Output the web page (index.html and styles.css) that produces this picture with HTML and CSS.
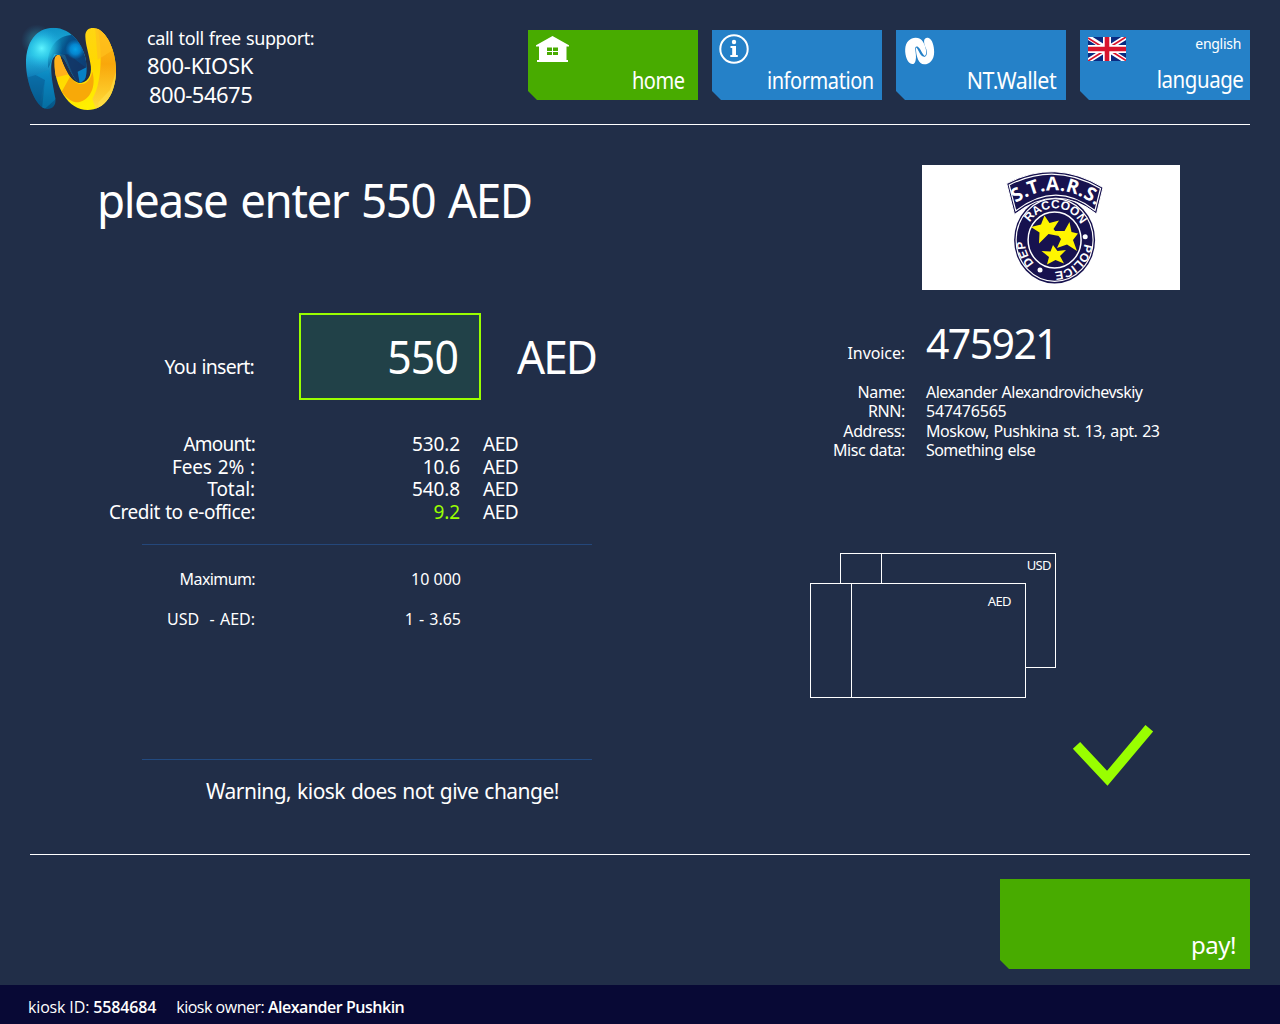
FILE: index.html
```html
<!DOCTYPE html>
<html lang="en">
<head>
<meta charset="utf-8">
<title>Kiosk payment</title>
<link rel="stylesheet" href="styles.css">
</head>
<body>
<header class="header">
  <svg class="logo" viewBox="0 0 345 315">
    <defs>
      <linearGradient id="blue" x1="0" y1="0" x2="0" y2="1"><stop offset="0" stop-color="#0d8fc4"/><stop offset=".35" stop-color="#25b8e0"/><stop offset=".6" stop-color="#0f7db8"/><stop offset="1" stop-color="#04507f"/></linearGradient>
      <linearGradient id="arch" x1="0" y1="0" x2="1" y2=".6"><stop offset="0" stop-color="#10b5d8"/><stop offset=".4" stop-color="#06518a"/><stop offset="1" stop-color="#103a70"/></linearGradient>
      <radialGradient id="glow"><stop offset="0" stop-color="#5ff4ff"/><stop offset=".5" stop-color="#34d4ee" stop-opacity=".6"/><stop offset="1" stop-color="#20a0e0" stop-opacity="0"/></radialGradient>
      <radialGradient id="spot"><stop offset="0" stop-color="#06a2e8"/><stop offset=".5" stop-color="#0490dc" stop-opacity=".85"/><stop offset="1" stop-color="#0480d0" stop-opacity="0"/></radialGradient>
      <linearGradient id="gold" x1="0" y1="0" x2=".3" y2="1"><stop offset="0" stop-color="#ffd51c"/><stop offset=".6" stop-color="#ffd800"/><stop offset="1" stop-color="#fff000"/></linearGradient>
      <linearGradient id="amber" x1="0" y1="0" x2="0" y2="1"><stop offset="0" stop-color="#ffc21c"/><stop offset=".45" stop-color="#f9a70b"/><stop offset="1" stop-color="#ffe03c"/></linearGradient>
      <clipPath id="blueClip"><path d="M95 282C65 282 33 205 33 145C33 80 65 38 115 38C170 38 215 95 215 160C215 185 210 200 195 204C172 195 160 150 145 130C135 116 125 116 118 125C100 140 112 200 121 250C124 272 112 283 95 282Z"/></clipPath>
      <clipPath id="goldClip"><path d="M211 65C210 45 222 38 237 39C275 42 303 110 303 165C303 235 270 285 218 285C160 285 118 215 118 140C118 125 128 116 135 122C145 150 165 204 198 204C225 200 232 170 226 145C220 110 212 90 211 65Z"/></clipPath>
    </defs>
    <circle cx="66" cy="76" r="48" fill="url(#glow)" opacity=".35"/>
    <g clip-path="url(#blueClip)">
      <rect x="30" y="30" width="190" height="260" fill="url(#blue)"/>
      <path d="M100 160C92 110 120 62 170 60L225 60V220H190L150 120L118 118Z" fill="url(#arch)"/>
      <path d="M30 190L62 180L90 195L68 290H30Z" fill="#045b92" opacity=".45"/>
      <path d="M62 180L100 165L125 250L80 290L90 195Z" fill="#0693cb" opacity=".4"/>
      <circle cx="80" cy="100" r="62" fill="url(#glow)"/>
      <path d="M125 120L160 118L215 160L190 170L196 210L150 150Z" fill="#15325f" opacity=".7"/>
      <circle cx="181" cy="103" r="30" fill="url(#spot)"/>
      <path d="M188 170L216 156V190L194 205Z" fill="#0781c5"/>
    </g>
    <g clip-path="url(#goldClip)">
      <rect x="110" y="30" width="200" height="260" fill="url(#gold)"/>
      <path d="M248 38C262 110 262 200 232 252L245 290H310V30Z" fill="url(#amber)"/>
      <path d="M248 134L310 95V30H240Z" fill="#ffc01c" opacity=".7"/>
      <path d="M112 110H140L160 178L120 188Z" fill="#ffb01c"/>
      <path d="M140 230L165 185C195 225 225 205 232 170C245 215 225 255 190 262C170 262 155 250 140 230Z" fill="#f8a908"/>
      <path d="M250 262L285 225L303 170V290H250Z" fill="#ffe050" opacity=".55"/>
    </g>
  </svg>
  <div class="support">
    <div class="support-title">call toll free support:</div>
    <div class="phone">800-KIOSK</div>
    <div class="phone phone-digits">800-54675</div>
  </div>
  <nav class="nav">
    <a class="tile tile-home">
      <svg class="icon icon-home" viewBox="0 0 33 26"><path fill="#fff" fill-rule="evenodd" d="M16.500 0L33 9.300V10.600H30.500V24H32V26H1V24H3V10.600H0V9.300ZM11 11.500V15H16V11.500ZM17 11.500V15H22V11.500ZM11 16V19H16V16ZM17 16V19H22V16Z"/></svg>
      <span class="label">home</span>
    </a>
    <a class="tile tile-info">
      <svg class="icon icon-info" viewBox="0 0 30 30"><circle cx="15" cy="15" r="13.700" fill="none" stroke="#fff" stroke-width="2"/><circle cx="15" cy="8" r="2.200" fill="#fff"/><path fill="#fff" d="M11.500 12H17V21H18.800V23H11.300V21H13.200V14H11.500Z"/></svg>
      <span class="label">information</span>
    </a>
    <a class="tile tile-wallet">
      <svg class="icon icon-wallet" viewBox="0 0 92 86"><path fill="#fff" d="M24 83C10 84 1 58 2 38C3 14 18 2 34 2C55 2 63 22 66 40C67 50 66 56 62 58C54 53 50 36 41 30C35 27 32 31 33 38C34 50 37 62 34 72C32 80 29 83 24 83Z"/><path fill="#fff" d="M60 14C60 4 67 1 74 3C86 8 91 28 91 46C91 70 78 84 60 84C44 84 35 60 35 32C42 34 46 58 60 61C69 62 70 50 67 38C64 30 60 24 60 14Z"/></svg>
      <span class="label">NT.Wallet</span>
    </a>
    <a class="tile tile-language">
      <div class="tile-top">
        <svg class="icon icon-flag" viewBox="0 0 38 24"><path fill="#0a2a80" d="M0 0H38V24H0Z"/><path stroke="#fff" stroke-width="5" d="M0 0L38 24M38 0L0 24"/><path stroke="#d8142c" stroke-width="1.700" d="M0 1L16 11M38 0L22 10M0 24L16 14M38 23.500L22 13.500"/><path stroke="#fff" stroke-width="8" d="M19 0V24M0 12H38"/><path stroke="#d8142c" stroke-width="4.600" d="M19 0V24M0 12H38"/></svg>
        <span class="current">english</span>
      </div>
      <span class="label">language</span>
    </a>
  </nav>
</header>

<main class="main">
  <section class="payment">
    <h1 class="title">please enter 550 AED</h1>
    <div class="insert">
      <span class="insert-label">You insert:</span>
      <span class="insert-box"><span class="insert-value">550</span></span>
      <span class="insert-unit">AED</span>
    </div>
    <div class="sums">
      <span class="tight">Amount:</span><span>530.2</span><span class="unit">AED</span>
      <span class="fees">Fees 2% :</span><span>10.6</span><span class="unit">AED</span>
      <span>Total:</span><span>540.8</span><span class="unit">AED</span>
      <span class="office">Credit to e-office:</span><span class="credit">9.2</span><span class="unit">AED</span>
    </div>
    <div class="limits">
      <span class="maximum">Maximum:</span><span>10 000</span>
      <span class="rate">USD&nbsp; - AED:</span><span class="rate">1 - 3.65</span>
    </div>
    <p class="warning">Warning, kiosk does not give change!</p>
  </section>

  <section class="details">
    <div class="provider">
      <svg class="badge" viewBox="0 0 150 125">
        <defs>
          <path id="ring" pathLength="360" d="M64.300 105.100A30.400 32 0 0 1 84.900 44.900A30.400 32 0 0 1 64.300 105.100"/>
          <path id="banner" d="M34 39.500Q75 10 118 42"/>
        </defs>
        <ellipse cx="74.600" cy="75" rx="40.500" ry="43.500" fill="#17124f"/>
        <ellipse cx="74.600" cy="75" rx="38.500" ry="41.300" fill="none" stroke="#fff" stroke-width="1.200"/>
        <ellipse cx="74.600" cy="75" rx="26.500" ry="28" fill="none" stroke="#fff" stroke-width="1.500"/>
        <path d="M26.700 18.500Q75 -7 123 22.500L116.500 49Q76 17 34.500 49.500Z" fill="#17124f" stroke="#fff" stroke-width="1"/>
        <path d="M29.200 20Q75 -3.500 120.500 23.500L115 45.500Q76 14.500 35.800 45.800Z" fill="none" stroke="#fff" stroke-width="1.200"/>
        <text class="banner-text"><textPath href="#banner" startOffset="50%">S.T.A.R.S.</textPath></text>
        <g class="ring-text">
          <text><textPath href="#ring" startOffset="46">DEP</textPath></text>
          <text><textPath href="#ring" startOffset="163">RACCOON</textPath></text>
          <text><textPath href="#ring" startOffset="299">POLICE</textPath></text>
        </g>
        <circle cx="105.200" cy="71.700" r="2.500" fill="#fff"/><circle cx="60" cy="105" r="2.500" fill="#fff"/>
        <g fill="#fff500">
          <path d="M64.500 50.500L69.500 58L79 55.500L73.500 64L79 71L68.500 69L59 78.500L59.500 67.500L51 62L61 59.500Z"/>
          <path d="M89.500 57L91.500 67L98 68.500L93 75L97 86L87 79.500L77 83L81 74L74.500 66L84.500 66Z"/>
          <path d="M73 80L77.500 86L86 85L80 91L84 98.500L75.500 95L67 99.500L69 92L61.500 86L70.500 86.500Z"/>
        </g>
      </svg>
    </div>
    <div class="invoice">
      <span class="invoice-label">Invoice:</span>
      <span class="invoice-number">475921</span>
    </div>
    <div class="fields">
      <span>Name:</span><span class="name">Alexander Alexandrovichevskiy</span>
      <span>RNN:</span><span>547476565</span>
      <span>Address:</span><span class="address">Moskow, Pushkina st. 13, apt. 23</span>
      <span>Misc data:</span><span class="misc">Something else</span>
    </div>
    <div class="bills">
      <div class="bill bill-usd">USD</div>
      <div class="bill bill-aed">AED</div>
    </div>
    <svg class="check" viewBox="0 0 82 62"><path fill="none" stroke="#9f0" stroke-width="10" d="M4.500 20.300L35.300 53.300L77.300 3.200"/></svg>
  </section>
</main>

<div class="actions"><a class="pay">pay!</a></div>

<footer class="footer">
  <span class="kiosk-id">kiosk ID: <strong>5584684</strong></span>
  <span class="kiosk-owner">kiosk owner: <strong>Alexander Pushkin</strong></span>
</footer>
</body>
</html>
```
FILE: styles.css
```css
* { box-sizing: border-box; }
body {
  margin: 0;
  width: 1280px;
  height: 1024px;
  display: flex;
  flex-direction: column;
  background: #212e48;
  color: #fff;
  font-family: "Noto Sans", sans-serif;
}
a { color: inherit; text-decoration: none; }
span { white-space: nowrap; }

.header {
  height: 125px;
  margin: 0 30px;
  border-bottom: 1px solid #fff;
  display: flex;
  flex: none;
}
.logo { width: 115px; height: 105px; margin: 15px 0 0 -15px; }
.support { margin: 25px 0 0 17px; line-height: 29px; flex: 1; }
.support-title { font-size: 18px; letter-spacing: -.42px; word-spacing: 1px; line-height: 26px; }
.phone { font-size: 22px; letter-spacing: -.3px; }
.phone-digits { margin-left: 2px; letter-spacing: -.5px; }
.nav { display: flex; gap: 14px; margin-top: 30px; }
.tile {
  width: 170px;
  height: 70px;
  background: #2581c8;
  clip-path: polygon(0 0, 100% 0, 100% 100%, 9px 100%, 0 61px);
  display: flex;
  flex-direction: column;
  justify-content: space-between;
}
.tile-home { background: #48ab00; padding-right: 13px; }
.tile-info { padding-right: 8px; }
.tile-wallet { padding-right: 10px; }
.tile-language { padding-right: 7px; }
.tile-top { display: flex; justify-content: space-between; }
.icon { display: block; }
.icon-home { width: 33px; height: 26px; margin: 6px 0 0 8px; }
.icon-info { width: 30px; height: 30px; margin: 4px 0 0 7px; }
.icon-wallet { width: 31px; height: 29px; margin: 7px 0 0 8px; }
.icon-flag { width: 38px; height: 24px; margin: 7px 0 0 8px; }
.current { font-size: 14px; line-height: 20px; margin: 4px 2px 0 0; letter-spacing: -.3px; }
.label {
  align-self: flex-end;
  font-size: 23px;
  line-height: 30px;
  margin-bottom: 5px;
  letter-spacing: -.5px;
  transform: scaleX(.87);
  transform-origin: right;
}
.tile-wallet .label { transform: scaleX(.93); }
.tile-language .label { margin-bottom: 6px; transform: scaleX(.89); }

.main { display: flex; height: 730px; margin: 0 30px; border-bottom: 1px solid #fff; flex: none; }
.payment { width: 730px; }
.title {
  width: 500px;
  margin: 45px 0 0 67px;
  font-size: 48px;
  line-height: 60px;
  font-weight: 400;
  letter-spacing: -1.5px;
  word-spacing: 2.5px;
  white-space: nowrap;
  transform: scaleX(.952);
  transform-origin: left;
}
.insert { display: grid; grid-template-columns: 225px 182px auto; column-gap: 44px; margin-top: 83px; line-height: 87px; }
.insert-label { font-size: 19.500px; text-align: right; padding: 10px 1px 0 0; height: 87px; letter-spacing: -.75px; word-spacing: 1px; }
.insert-box { height: 87px; border: 2px solid #9f0; background: #214148; text-align: right; padding-right: 21px; font-size: 46px; line-height: 82px; }
.insert-value { display: inline-block; letter-spacing: -1px; transform: scaleX(.93); transform-origin: right; }
.insert-unit { font-size: 45px; margin-left: -8px; letter-spacing: -2px; transform: scaleX(.98); transform-origin: left; }
.sums { display: grid; grid-template-columns: 225px 205px auto; margin-top: 33px; font-size: 19px; line-height: 22.670px; text-align: right; letter-spacing: -.1px; }
.sums .unit { text-align: left; padding-left: 23px; letter-spacing: -.5px; }
.sums .tight { letter-spacing: -.75px; }
.sums .fees { word-spacing: 1px; }
.sums .office { letter-spacing: -.48px; word-spacing: 1px; }
.credit { color: #9f0; }
.limits { display: grid; grid-template-columns: 113px 206px; width: 450px; height: 216px; margin: 20px 0 0 112px; padding-top: 24px; border-top: 1px solid #24477a; border-bottom: 1px solid #224a80; font-size: 16px; line-height: 20px; grid-auto-rows: 20px; row-gap: 20px; text-align: right; }
.limits .maximum { letter-spacing: -.6px; }
.limits .rate { word-spacing: 1px; }
.warning { margin: 16px 0 0 176px; font-size: 21px; line-height: 30px; letter-spacing: -.54px; word-spacing: 1px; }

.details { width: 490px; padding-left: 50px; }
.provider { width: 258px; height: 125px; margin: 40px 0 0 112px; background: #fff; }
.badge { display: block; width: 150px; height: 125px; margin-left: 58px; }
.banner-text { font: 700 19px "Open Sans", sans-serif; fill: #fff; text-anchor: middle; letter-spacing: .2px; }
.ring-text { font: 700 12px "Liberation Sans", sans-serif; fill: #fff; text-anchor: middle; }
.invoice { display: grid; grid-template-columns: 95px auto; column-gap: 21px; align-items: baseline; margin-top: 24px; line-height: 58px; height: 58px; }
.invoice-label { font-size: 16px; text-align: right; letter-spacing: -.1px; }
.invoice-number { font-size: 41px; letter-spacing: -1.6px; }
.fields { display: grid; grid-template-columns: 95px auto; column-gap: 21px; margin-top: 11px; font-size: 16px; line-height: 19.400px; letter-spacing: -.2px; }
.fields > :nth-child(odd) { text-align: right; letter-spacing: -.4px; }
.fields .name { letter-spacing: -.54px; word-spacing: 1px; }
.fields .address { letter-spacing: -.45px; word-spacing: 1px; }
.fields .misc { letter-spacing: -.56px; word-spacing: 1px; }
.bills { position: relative; width: 246px; height: 145px; margin: 92.600px 0 0 0; }
.bill { position: absolute; width: 216px; height: 115px; border: 1px solid #fff; background: linear-gradient(#fff, #fff) 40px 0 / 1px 100% no-repeat #212e48; font-size: 13px; line-height: 20px; text-align: right; letter-spacing: -.6px; }
.bill-usd { left: 30px; top: 0; padding: 1px 4px 0 0; }
.bill-aed { left: 0; top: 30px; padding: 7px 14px 0 0; }
.check { display: block; width: 82px; height: 62px; margin: 27px 0 0 262px; }

.actions { height: 130px; padding: 24px 30px 0 0; display: flex; justify-content: flex-end; flex: none; }
.pay { width: 250px; height: 90px; background: #48ab00; clip-path: polygon(0 0, 100% 0, 100% 100%, 9px 100%, 0 81px); text-align: right; font-size: 24px; line-height: 30px; padding: 51px 14px 0 0; letter-spacing: -.5px; }
.footer { height: 39px; background: #080935; display: flex; gap: 20px; padding-left: 28px; font: 16px/44px "Open Sans", sans-serif; }
.footer strong { font-weight: 600; }
.kiosk-id { letter-spacing: -.15px; }
.kiosk-owner { letter-spacing: -.48px; }
```
